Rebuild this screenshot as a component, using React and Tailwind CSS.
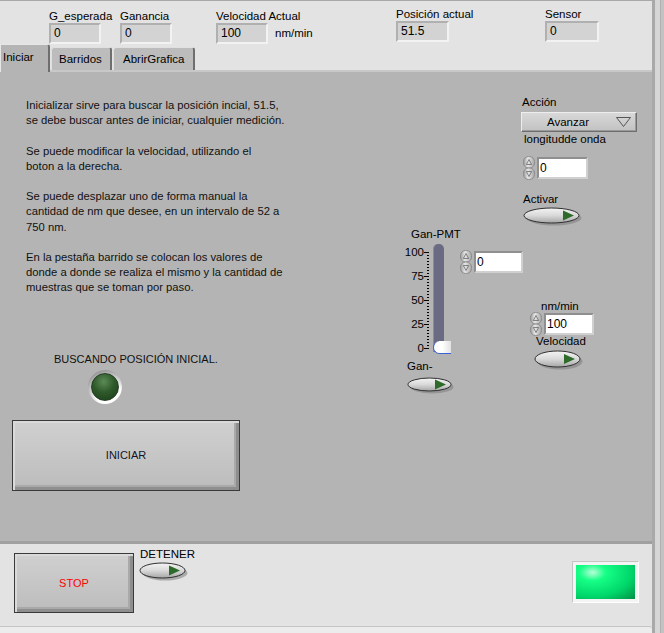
import React from 'react';

const FONT = "font-['Liberation_Sans',Arial,sans-serif]";

const paragraphs = [
  ['Inicializar sirve para buscar la posición incial, 51.5,', 'se debe buscar antes de iniciar, cualquier medición.'],
  ['Se puede modificar la velocidad, utilizando el', 'boton a la derecha.'],
  ['Se puede desplazar uno de forma manual la', 'cantidad de nm que desee, en un intervalo de 52 a', '750 nm.'],
  ['En la pestaña barrido se colocan los valores de', 'donde a donde se realiza el mismo y la cantidad de', 'muestras que se toman por paso.'],
];

function Indicator({ label, value, className = '', w = 'w-[52px]' }) {
  return (
    <div className={`flex flex-col shrink-0 ${w} ${className}`}>
      <div className="leading-[14px] whitespace-nowrap">{label}</div>
      <div
        className={`h-[21px] ${w} bg-[#d3d3d3] border-2 border-t-[#b0b0b0] border-l-[#b0b0b0] border-b-[#f2f2f2] border-r-[#f2f2f2] pl-[3px] leading-[17px] text-[12px]`}
      >
        {value}
      </div>
    </div>
  );
}

function Spinner() {
  return (
    <svg width="12" height="24" viewBox="0 0 12 24" className="shrink-0">
      <defs>
        <linearGradient id="spg" x1="0" y1="0" x2="1" y2="0">
          <stop offset="0" stopColor="#9a9a9a" />
          <stop offset="0.4" stopColor="#e6e6e6" />
          <stop offset="1" stopColor="#a8a8a8" />
        </linearGradient>
      </defs>
      <rect x="0.5" y="0.5" width="11" height="11.5" rx="5" fill="url(#spg)" stroke="#8c8c8c" />
      <rect x="0.5" y="12" width="11" height="11.5" rx="5" fill="url(#spg)" stroke="#8c8c8c" />
      <path d="M3.3 8.5 L6 3.5 L8.7 8.5 Z" fill="none" stroke="#6a6a6a" strokeWidth="0.8" />
      <path d="M3.3 15.5 L6 20.5 L8.7 15.5 Z" fill="none" stroke="#6a6a6a" strokeWidth="0.8" />
    </svg>
  );
}

function Numeric({ value, w, className = '' }) {
  return (
    <div className={`flex items-center shrink-0 ${className}`}>
      <Spinner />
      <div
        className={`h-[22px] ${w} shrink-0 ml-[2px] bg-white border-[2px] border-t-[#8f8f8f] border-l-[#8f8f8f] border-b-[#d0d0d0] border-r-[#d0d0d0] pl-[1px] text-[12px] leading-[18px] text-black`}
      >
        {value}
      </div>
    </div>
  );
}

function Toggle({ w = 50, h = 20, className = '' }) {
  const rx = (w - 5) / 2;
  const ry = (h - 5) / 2;
  const cx = rx + 1;
  const cy = ry + 1;
  return (
    <svg className={`block shrink-0 ${className}`} width={w} height={h} viewBox={`0 0 ${w} ${h}`}>
      <defs>
        <linearGradient id="tgl" x1="0" y1="0" x2="0" y2="1">
          <stop offset="0" stopColor="#f4f4f4" />
          <stop offset="0.5" stopColor="#d9d9d9" />
          <stop offset="1" stopColor="#a6a6a6" />
        </linearGradient>
      </defs>
      <ellipse cx={cx + 2.5} cy={cy + 2.5} rx={rx} ry={ry} fill="#7c7c7c" opacity="0.55" />
      <ellipse cx={cx} cy={cy} rx={rx} ry={ry} fill="url(#tgl)" stroke="#2f2f2f" strokeWidth="1" />
      <path d={`M${w - 20} ${cy - 5} L${w - 9} ${cy} L${w - 20} ${cy + 5} Z`} fill="#2e6b2a" />
    </svg>
  );
}

function Slider() {
  const labels = ['100', '75', '50', '25', '0'];
  const minors = Array.from({ length: 33 }, (_, i) => 7.7 + i * ((104.3 - 7.7) / 32));
  return (
    <div className="flex shrink-0 h-[114px] w-[60px]">
      <div className="w-[24px] shrink-0 flex flex-col items-end gap-[12.15px] pt-[1.7px] text-[11.5px] leading-[12px]">
        {labels.map((l) => (
          <div key={l}>{l}</div>
        ))}
      </div>
      <svg width="5" height="114" viewBox="0 0 5 114" className="shrink-0">
        {minors.map((t, i) => (
          <rect key={i} x={i % 8 === 0 ? 0 : 3} y={Math.round(t)} width={i % 8 === 0 ? 5 : 2} height="1" fill="#000" />
        ))}
      </svg>
      <div className="relative shrink-0 ml-[4px] w-[11px] h-[108px] rounded-t-[5px] bg-[#6a6a82] border-l border-[#8a8aa0]">
        <div className="absolute -left-px top-[97px] w-[18px] h-[13px] rounded-l-full bg-gradient-to-r from-white via-white to-[#e2e2e2] border-l border-b border-[#3a63d8]" />
      </div>
    </div>
  );
}

function Bevel({ className = '', children }) {
  return (
    <div
      className={`flex items-center justify-center shrink-0 border border-[#3a3a3a] bg-gradient-to-b from-[#d0d0d0] to-[#bcbcbc] shadow-[inset_2px_2px_0_#dadada,inset_-3px_-3px_0_#8e8e8e,inset_-5px_-5px_0_#a9a9a9] ${className}`}
    >
      {children}
    </div>
  );
}

const lbl = 'leading-[14px] whitespace-nowrap';

export default function App() {
  return (
    <div className={`w-[664px] h-[633px] flex bg-[#e3e3e3] text-[11.5px] text-black overflow-hidden ${FONT}`}>
      <div className="w-[652px] flex flex-col">
        {/* indicator strip */}
        <div className="h-[44px] border-t border-[#a8a8a8] flex items-start">
          <Indicator label="G_esperada" value="0" className="ml-[49px] mt-[8px]" />
          <Indicator label="Ganancia" value="0" className="ml-[19px] mt-[8px]" />
          <Indicator label="Velocidad Actual" value="100" className="ml-[44px] mt-[8px]" />
          <div className={`${lbl} w-[40px] shrink-0 ml-[7px] mt-[25px]`}>nm/min</div>
          <Indicator label="Posición actual" value="51.5" className="ml-[81px] mt-[6px]" w="w-[53px]" />
          <Indicator label="Sensor" value="0" className="ml-[96px] mt-[6px]" w="w-[54px]" />
        </div>

        {/* tabs */}
        <div className="h-[26px] flex items-end">
          <div className="relative z-10 h-[28px] w-[50px] -mb-[2px] bg-[#b4b4b4] border-t border-l border-[#e6e6e6] border-r-2 border-r-[#6e6e6e] rounded-tr-[3px] pl-[2px] pt-[5px] leading-[14px]">
            Iniciar
          </div>
          <div className="h-[23px] w-[61px] ml-[1px] bg-[#bcbcbc] border-t border-l border-[#e0e0e0] border-r-2 border-r-[#6e6e6e] rounded-t-[3px] pl-[7px] pt-[4px] leading-[14px]">
            Barridos
          </div>
          <div className="h-[23px] w-[82px] ml-[1px] bg-[#bcbcbc] border-t border-l border-[#e0e0e0] border-r-2 border-r-[#6e6e6e] rounded-t-[3px] pl-[9px] pt-[4px] leading-[14px]">
            AbrirGrafica
          </div>
        </div>

        {/* tab page */}
        <div className="h-[474px] bg-[#b4b4b4] border-t-2 border-[#c8c8c8] border-b-[3px] border-b-[#a0a0a0] flex">
          {/* left column */}
          <div className="w-[400px] shrink-0 flex flex-col pt-[26px]">
            <div className="ml-[26px] text-[11.25px] leading-[15.2px] text-[#111]">
              {paragraphs.map((p, i) => (
                <div key={i} className={i > 0 ? 'mt-[15.2px]' : ''}>
                  {p.map((l) => (
                    <div key={l}>{l}</div>
                  ))}
                </div>
              ))}
            </div>
            <div className="ml-[54px] mt-[56px] text-[11px] leading-[15.2px] text-[#111]">BUSCANDO POSICIÓN INICIAL.</div>
            <div className="ml-[88px] mt-[3px] w-[34px] h-[34px] rounded-full bg-[radial-gradient(circle_at_60%_70%,#ffffff_40%,#9a9a9a_75%,#bdbdbd_100%)] flex items-center justify-center">
              <div className="w-[28px] h-[28px] rounded-full bg-[radial-gradient(circle_at_45%_30%,#5c8a56_0%,#2f5a2b_45%,#1a3a18_100%)] border border-[#263e24]" />
            </div>
            <Bevel className="ml-[12px] mt-[16px] w-[228px] h-[71px] text-[11px] text-[#141428]">INICIAR</Bevel>
          </div>

          {/* Gan-PMT column */}
          <div className="w-[121px] shrink-0 flex flex-col pt-[155px]">
            <div className={`${lbl} ml-[11px]`}>Gan-PMT</div>
            <div className="flex items-start mt-[3px]">
              <Slider />
              <Numeric value="0" w="w-[49px]" className="mt-[6px]" />
            </div>
            <div className={`${lbl} ml-[7px] mt-[1px]`}>Gan-</div>
            <Toggle w={48} h={18} className="ml-[7px] mt-[4px]" />
          </div>

          {/* right column */}
          <div className="flex-1 flex flex-col pt-[23px]">
            <div className={`${lbl} ml-[1px]`}>Acción</div>
            <div className="mt-[3px] w-[116px] h-[20px] flex items-center justify-between pl-[25px] pr-[5px] bg-gradient-to-b from-[#d8d8d8] to-[#c2c2c2] border border-t-[#eeeeee] border-l-[#eeeeee] border-b-[#6e6e6e] border-r-[#6e6e6e] shadow-[inset_-1px_-1px_0_#9a9a9a]">
              <span className="leading-[14px]">Avanzar</span>
              <svg width="15" height="10" viewBox="0 0 15 10">
                <path d="M0.5 0.5 H14.5 L7.5 9.5 Z" fill="none" stroke="#555" strokeWidth="1" />
              </svg>
            </div>
            <div className={`${lbl} ml-[3px]`}>longitudde onda</div>
            <Numeric value="0" w="w-[51px]" className="ml-[2px] mt-[10px]" />
            <div className={`${lbl} ml-[2px] mt-[12px]`}>Activar</div>
            <Toggle w={60} h={20} className="ml-[2px] mt-[1px]" />
            <div className={`${lbl} ml-[20px] mt-[72px]`}>nm/min</div>
            <Numeric value="100" w="w-[50px]" className="ml-[9px] -mt-[1px]" />
            <div className={`${lbl} ml-[15px] -mt-[2px]`}>Velocidad</div>
            <Toggle w={50} h={21} className="ml-[13px] mt-[2px]" />
          </div>
        </div>

        {/* bottom strip */}
        <div className="h-[82px] flex items-start">
          <Bevel className="ml-[14px] mt-[9px] w-[120px] h-[60px] text-[11px] text-[#ff0000]">STOP</Bevel>
          <div className="ml-[6px] mt-[3px] flex flex-col">
            <div className={lbl}>DETENER</div>
            <Toggle w={50} h={20} className="-ml-px mt-[1px]" />
          </div>
          <div className="ml-auto mr-[13px] mt-[17px] w-[67px] h-[42px] p-[3px] bg-[#f4f4f4] border border-t-[#c4c4c4] border-l-[#c4c4c4] border-b-white border-r-white">
            <div className="w-full h-full bg-[radial-gradient(ellipse_at_28%_22%,#b8ffd8_0%,#16ff86_22%,#00d66a_65%,#008f46_100%)]" />
          </div>
        </div>
        <div className="flex-1 border-t border-[#c4c4c4] bg-[#ececec] rounded-tr-[3px]" />
      </div>

      {/* right frame */}
      <div className="w-[12px] flex">
        <div className="w-[3px] bg-[#a9a9a9]" />
        <div className="w-[5px] bg-[#d6d6d6]" />
        <div className="w-[4px] bg-[#c2c2c2] border-l border-[#b0b0b0]" />
      </div>
    </div>
  );
}
